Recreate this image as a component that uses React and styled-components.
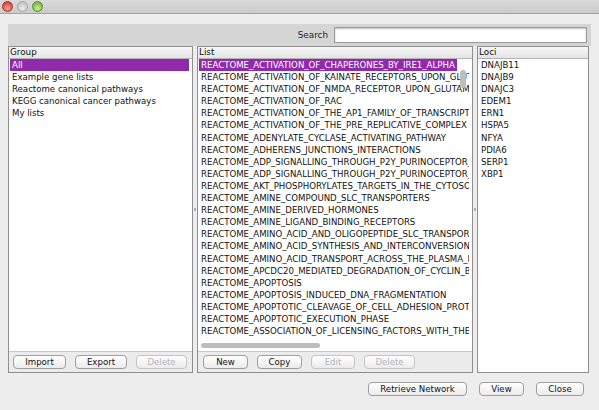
import React from 'react'
import styled, { createGlobalStyle } from 'styled-components'

const Global = createGlobalStyle`
  html, body {
    margin: 0;
    padding: 0;
    background: #ededed;
  }
  body {
    font-family: "DejaVu Sans", "Noto Sans", sans-serif;
    font-size: 8.6px;
    color: #111;
  }
`

const Window = styled.div`
  width: 599px;
  height: 410px;
  display: flex;
  flex-direction: column;
  overflow: hidden;
  background: #ededed;
`

const TitleBar = styled.div`
  height: 13px;
  border-bottom: 1px solid #a3a3a3;
  background: linear-gradient(#dadada, #cbcbcb);
  display: flex;
  align-items: center;
  gap: 4px;
  padding-left: 2px;
  overflow: hidden;
`

const Light = styled.span`
  width: 11px;
  height: 11px;
  border-radius: 50%;
  box-sizing: border-box;
  border: 1px solid ${p => p.$edge};
  background: radial-gradient(circle at 50% 70%, ${p => p.$light} 0%, ${p => p.$color} 70%);
`

const Content = styled.div`
  padding: 10px 8px 0 8px;
  display: flex;
  flex-direction: column;
`

const SearchBand = styled.div`
  height: 22px;
  background: #d5d5d5;
  display: flex;
  align-items: center;
  justify-content: flex-end;
  gap: 6px;
  padding-right: 4px;
`

const SearchLabel = styled.span`
  font-size: 8.8px;
  color: #222;
`

const SearchInput = styled.input`
  width: 253px;
  height: 16px;
  box-sizing: border-box;
  border: 1px solid #9b9b9b;
  box-shadow: inset 0 1px 2px rgba(0, 0, 0, 0.25);
  background: #fff;
  outline: none;
  padding: 0 3px;
`

const Panels = styled.div`
  height: 327px;
  display: flex;
  padding-right: 2px;
`

const Panel = styled.div`
  width: ${p => p.$width}px;
  box-sizing: border-box;
  border: 1px solid #8f8f8f;
  background: #fff;
  display: flex;
  flex-direction: column;
`

const Header = styled.div`
  height: 11px;
  line-height: 11px;
  padding-left: 1px;
  font-size: 8.8px;
  background: linear-gradient(#f7f7f7, #e4e4e4);
  border-bottom: 1px solid #b3b3b3;
`

const Body = styled.div`
  flex: 1;
  position: relative;
  overflow: hidden;
  padding: 0 3px 0 1px;
`

const Row = styled.div`
  height: 12.1px;
  line-height: 12.1px;
  padding-left: 2px;
  white-space: nowrap;
  overflow: hidden;
  max-width: ${p => (p.$maxWidth ? `${p.$maxWidth}px` : 'none')};
  box-sizing: border-box;
  background: ${p => (p.$selected ? '#8f2aab' : 'transparent')};
  color: ${p => (p.$selected ? '#fff' : '#111')};
`

const ThumbV = styled.div`
  position: absolute;
  top: 11px;
  right: 6px;
  width: 6px;
  height: 18px;
  border-radius: 3px;
  background: #bdbdbd;
`

const ThumbH = styled.div`
  position: absolute;
  left: 3px;
  bottom: 3px;
  width: 119px;
  height: 5px;
  border-radius: 3px;
  background: #bdbdbd;
`

const ButtonBar = styled.div`
  height: 20px;
  border-top: 1px solid #c9c9c9;
  background: #ececec;
  display: flex;
  align-items: center;
  gap: ${p => p.$gap}px;
  padding-left: ${p => p.$pad}px;
`

const Button = styled.button`
  width: ${p => p.$width}px;
  height: 14px;
  padding: 0;
  box-sizing: border-box;
  border: 1px solid ${p => (p.disabled ? '#c4c4c4' : '#9f9f9f')};
  border-radius: 4px;
  background: linear-gradient(#ffffff, #ebebeb);
  font-family: "DejaVu Sans", sans-serif;
  font-size: 8.6px;
  color: ${p => (p.disabled ? '#b4b4b4' : '#111')};
  line-height: 12px;
  white-space: nowrap;
`

const Divider = styled.div`
  width: 4px;
  display: flex;
  align-items: center;
  justify-content: center;
`

const Grip = styled.span`
  width: 2px;
  height: 3px;
  background: #b0b0b0;
`

const BottomBar = styled.div`
  display: flex;
  justify-content: flex-end;
  gap: 12px;
  padding: 9px 15px 0 0;
`

const groups = [
  'All',
  'Example gene lists',
  'Reactome canonical pathways',
  'KEGG canonical cancer pathways',
  'My lists',
]

const pathways = [
  'REACTOME_ACTIVATION_OF_CHAPERONES_BY_IRE1_ALPHA',
  'REACTOME_ACTIVATION_OF_KAINATE_RECEPTORS_UPON_GLUTAMATE_BINDING',
  'REACTOME_ACTIVATION_OF_NMDA_RECEPTOR_UPON_GLUTAMATE_BINDING',
  'REACTOME_ACTIVATION_OF_RAC',
  'REACTOME_ACTIVATION_OF_THE_AP1_FAMILY_OF_TRANSCRIPTION_FACTORS',
  'REACTOME_ACTIVATION_OF_THE_PRE_REPLICATIVE_COMPLEX',
  'REACTOME_ADENYLATE_CYCLASE_ACTIVATING_PATHWAY',
  'REACTOME_ADHERENS_JUNCTIONS_INTERACTIONS',
  'REACTOME_ADP_SIGNALLING_THROUGH_P2Y_PURINOCEPTOR_1',
  'REACTOME_ADP_SIGNALLING_THROUGH_P2Y_PURINOCEPTOR_12',
  'REACTOME_AKT_PHOSPHORYLATES_TARGETS_IN_THE_CYTOSOL',
  'REACTOME_AMINE_COMPOUND_SLC_TRANSPORTERS',
  'REACTOME_AMINE_DERIVED_HORMONES',
  'REACTOME_AMINE_LIGAND_BINDING_RECEPTORS',
  'REACTOME_AMINO_ACID_AND_OLIGOPEPTIDE_SLC_TRANSPORTERS',
  'REACTOME_AMINO_ACID_SYNTHESIS_AND_INTERCONVERSION_TRANSAMINATION',
  'REACTOME_AMINO_ACID_TRANSPORT_ACROSS_THE_PLASMA_MEMBRANE',
  'REACTOME_APCDC20_MEDIATED_DEGRADATION_OF_CYCLIN_B',
  'REACTOME_APOPTOSIS',
  'REACTOME_APOPTOSIS_INDUCED_DNA_FRAGMENTATION',
  'REACTOME_APOPTOTIC_CLEAVAGE_OF_CELL_ADHESION_PROTEINS',
  'REACTOME_APOPTOTIC_EXECUTION_PHASE',
  'REACTOME_ASSOCIATION_OF_LICENSING_FACTORS_WITH_THE_PRE_REPLICATIVE_COMPLEX',
]

const loci = ['DNAJB11', 'DNAJB9', 'DNAJC3', 'EDEM1', 'ERN1', 'HSPA5', 'NFYA', 'PDIA6', 'SERP1', 'XBP1']

export default function App() {
  return (
    <Window>
      <Global />
      <TitleBar>
        <Light $color="#d9473f" $light="#f7a39c" $edge="#a8332c" />
        <Light $color="#c6c6c6" $light="#eeeeee" $edge="#a2a2a2" />
        <Light $color="#80b746" $light="#c8ee9b" $edge="#5d8c30" />
      </TitleBar>
      <Content>
        <SearchBand>
          <SearchLabel>Search</SearchLabel>
          <SearchInput />
        </SearchBand>
        <Panels>
          <Panel $width={185}>
            <Header>Group</Header>
            <Body>
              {groups.map((g, i) => (
                <Row key={g} $selected={i === 0}>{g}</Row>
              ))}
            </Body>
            <ButtonBar $gap={9} $pad={4}>
              <Button $width={53}>Import</Button>
              <Button $width={52}>Export</Button>
              <Button $width={51} disabled>Delete</Button>
            </ButtonBar>
          </Panel>
          <Divider><Grip /></Divider>
          <Panel $width={276}>
            <Header>List</Header>
            <Body>
              {pathways.map((p, i) => (
                <Row key={p} $selected={i === 0} $maxWidth={i === 0 ? 258 : 0}>{p}</Row>
              ))}
              <ThumbV />
              <ThumbH />
            </Body>
            <ButtonBar $gap={9} $pad={5}>
              <Button $width={45}>New</Button>
              <Button $width={45}>Copy</Button>
              <Button $width={44} disabled>Edit</Button>
              <Button $width={51} disabled>Delete</Button>
            </ButtonBar>
          </Panel>
          <Divider><Grip /></Divider>
          <Panel $width={112}>
            <Header>Loci</Header>
            <Body>
              {loci.map(l => (
                <Row key={l}>{l}</Row>
              ))}
            </Body>
          </Panel>
        </Panels>
      </Content>
      <BottomBar>
        <Button $width={99}>Retrieve Network</Button>
        <Button $width={45}>View</Button>
        <Button $width={48}>Close</Button>
      </BottomBar>
    </Window>
  )
}
